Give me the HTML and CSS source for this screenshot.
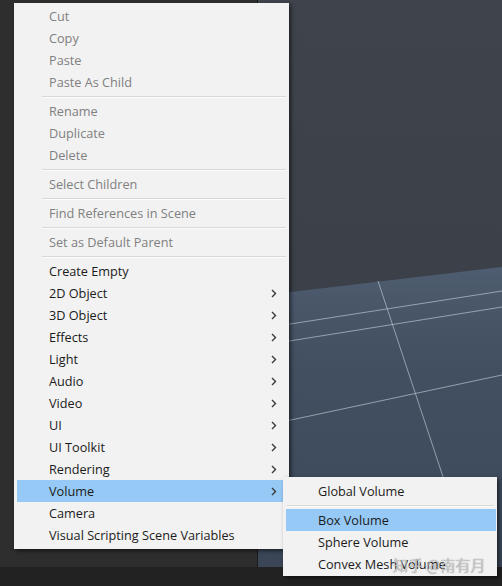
FILE: index.html
```html
<!DOCTYPE html>
<html>
<head>
<meta charset="utf-8">
<link rel="stylesheet" href="styles.css">
</head>
<body>
<div class="app">
  <div class="main">
    <div class="hierarchy"></div>
    <div class="scene">
      <svg class="scene-svg" width="244" height="567" viewBox="0 0 244 567">
        <defs>
          <linearGradient id="sky" x1="0" y1="0" x2="0" y2="1">
            <stop offset="0" stop-color="#3e434c"/>
            <stop offset="0.8" stop-color="#3a3f47"/>
            <stop offset="1" stop-color="#33373e"/>
          </linearGradient>
          <linearGradient id="ground" x1="0" y1="0" x2="0" y2="1">
            <stop offset="0" stop-color="#4f5d70"/>
            <stop offset="0.35" stop-color="#45536580"/>
            <stop offset="1" stop-color="#3a4656"/>
          </linearGradient>
        </defs>
        <rect x="0" y="0" width="244" height="567" fill="url(#sky)"/>
        <polygon points="0,296 244,267 244,567 0,567" fill="#3f4b5c"/>
        <polygon points="0,296 244,267 244,567 0,567" fill="url(#ground)"/>
        <g stroke="#b9c3cf" stroke-opacity="0.7" stroke-width="1" fill="none">
          <line x1="0" y1="329" x2="244" y2="291"/>
          <line x1="0" y1="346" x2="244" y2="307"/>
          <line x1="0" y1="427" x2="244" y2="375"/>
          <line x1="120" y1="281" x2="215" y2="567"/>
        </g>
      </svg>
    </div>
  </div>
  <div class="statusbar"></div>
</div>

<div class="menu main-menu">
  <div class="item disabled">Cut</div>
  <div class="item disabled">Copy</div>
  <div class="item disabled">Paste</div>
  <div class="item disabled">Paste As Child</div>
  <div class="sep"></div>
  <div class="item disabled">Rename</div>
  <div class="item disabled">Duplicate</div>
  <div class="item disabled">Delete</div>
  <div class="sep"></div>
  <div class="item disabled">Select Children</div>
  <div class="sep"></div>
  <div class="item disabled">Find References in Scene</div>
  <div class="sep"></div>
  <div class="item disabled">Set as Default Parent</div>
  <div class="sep"></div>
  <div class="item">Create Empty</div>
  <div class="item sub">2D Object<svg class="arrow" width="6" height="9" viewBox="0 0 6 9"><path d="M1 1 L4.5 4.5 L1 8"/></svg></div>
  <div class="item sub">3D Object<svg class="arrow" width="6" height="9" viewBox="0 0 6 9"><path d="M1 1 L4.5 4.5 L1 8"/></svg></div>
  <div class="item sub">Effects<svg class="arrow" width="6" height="9" viewBox="0 0 6 9"><path d="M1 1 L4.5 4.5 L1 8"/></svg></div>
  <div class="item sub">Light<svg class="arrow" width="6" height="9" viewBox="0 0 6 9"><path d="M1 1 L4.5 4.5 L1 8"/></svg></div>
  <div class="item sub">Audio<svg class="arrow" width="6" height="9" viewBox="0 0 6 9"><path d="M1 1 L4.5 4.5 L1 8"/></svg></div>
  <div class="item sub">Video<svg class="arrow" width="6" height="9" viewBox="0 0 6 9"><path d="M1 1 L4.5 4.5 L1 8"/></svg></div>
  <div class="item sub">UI<svg class="arrow" width="6" height="9" viewBox="0 0 6 9"><path d="M1 1 L4.5 4.5 L1 8"/></svg></div>
  <div class="item sub">UI Toolkit<svg class="arrow" width="6" height="9" viewBox="0 0 6 9"><path d="M1 1 L4.5 4.5 L1 8"/></svg></div>
  <div class="item sub">Rendering<svg class="arrow" width="6" height="9" viewBox="0 0 6 9"><path d="M1 1 L4.5 4.5 L1 8"/></svg></div>
  <div class="item sub active">Volume<svg class="arrow" width="6" height="9" viewBox="0 0 6 9"><path d="M1 1 L4.5 4.5 L1 8"/></svg></div>
  <div class="item">Camera</div>
  <div class="item">Visual Scripting Scene Variables</div>
</div>

<div class="menu sub-menu">
  <div class="item">Global Volume</div>
  <div class="sep"></div>
  <div class="item active">Box Volume</div>
  <div class="item">Sphere Volume</div>
  <div class="item">Convex Mesh Volume</div>
</div>

<div class="watermark">知乎 @南有月</div>
</body>
</html>
```

FILE: styles.css
```css
html, body {
  margin: 0;
  padding: 0;
}

body {
  width: 502px;
  height: 586px;
  overflow: hidden;
  background: #222222;
  position: relative;
  font-family: "Open Sans", "Noto Sans", sans-serif;
}

.app {
  display: flex;
  flex-direction: column;
  width: 502px;
  height: 586px;
}

.main {
  display: flex;
  height: 567px;
}

.hierarchy {
  width: 257px;
  background: #2e2e2e;
  border-right: 1px solid #1b1b1b;
}

.scene {
  flex: 1;
  overflow: hidden;
}

.scene-svg {
  display: block;
}

.statusbar {
  flex: 1;
  background: #222222;
}

.menu {
  position: absolute;
  background: #f2f2f2;
  box-shadow: 2px 2px 4px rgba(0, 0, 0, 0.55);
  box-sizing: border-box;
  display: flex;
  flex-direction: column;
}

.main-menu {
  left: 14px;
  top: 3px;
  width: 275px;
  padding: 2px 0 3px;
}

.sub-menu {
  left: 283px;
  top: 477px;
  width: 214px;
  padding: 3px 0 1px;
}

.item {
  height: 22px;
  line-height: 22px;
  font-size: 12.7px;
  color: #1b1b1b;
  margin: 0 3px;
  padding-left: 32px;
  padding-right: 9px;
  display: flex;
  align-items: center;
  justify-content: space-between;
  white-space: nowrap;
}

.sub-menu .item {
  margin: 0 1px 0 3px;
}

.item.disabled {
  color: #808080;
}

.item.active {
  background: #96c9f5;
}

.arrow {
  flex: none;
}

.arrow path {
  fill: none;
  stroke: #3a3a3a;
  stroke-width: 1.4;
}

.sep {
  height: 1px;
  background: #d8d8d8;
  border-bottom: 1px solid #fbfbfb;
  margin: 3px 3px 2px 28px;
}

.sub-menu .sep {
  margin: 3px 3px 2px 4px;
}

.watermark {
  position: absolute;
  left: 393px;
  top: 554px;
  font-family: "Noto Sans CJK SC", sans-serif;
  font-size: 15px;
  line-height: 22px;
  color: rgba(215, 215, 215, 0.75);
  text-shadow: 0 0 1px rgba(60, 60, 60, 0.6);
  white-space: nowrap;
}
```
